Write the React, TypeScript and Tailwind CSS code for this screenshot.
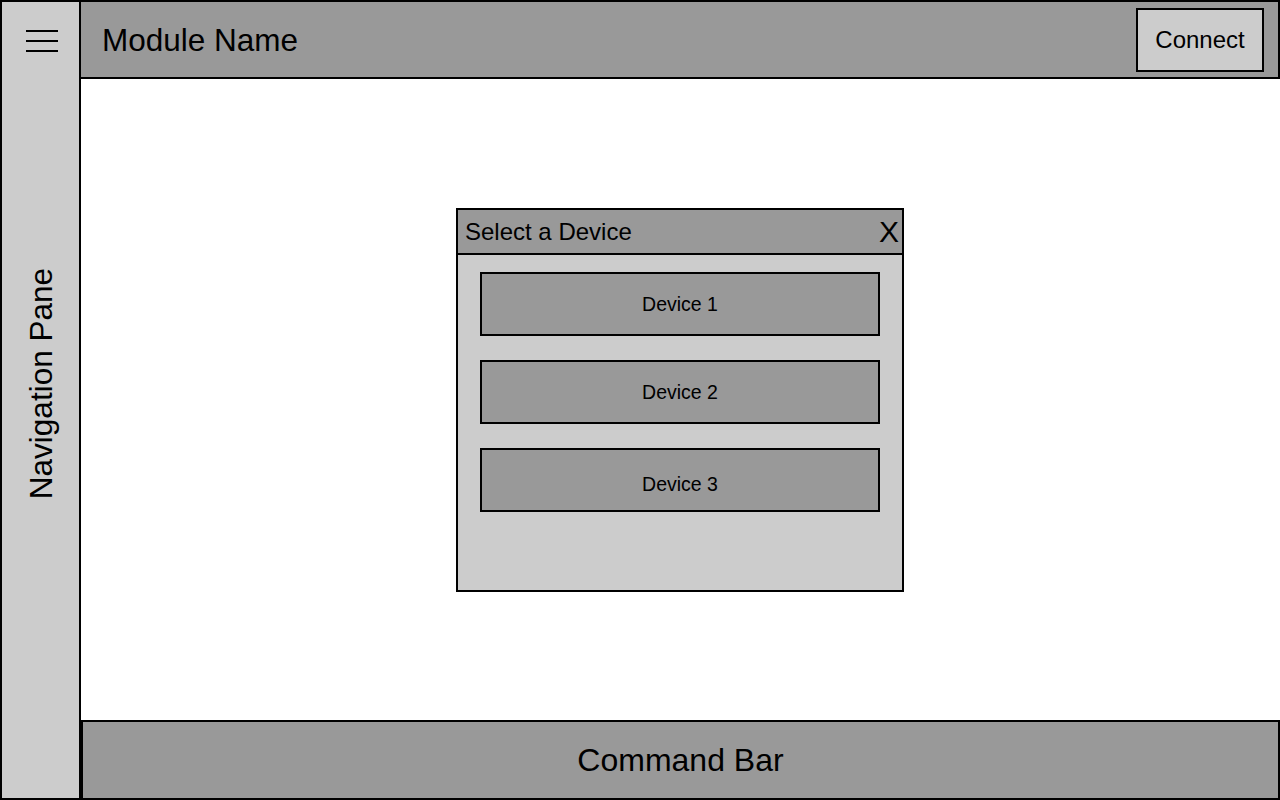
const DEVICES = [
  { id: 1, name: 'Device 1', pad: 'pt-[1px]' },
  { id: 2, name: 'Device 2', pad: 'pt-[1px]' },
  { id: 3, name: 'Device 3', pad: 'pt-[9px]' }
];

export default function App() {
  return (
    <div className="flex h-[800px] w-[1280px] overflow-hidden bg-white font-['Liberation_Sans',Arial,sans-serif] text-black">
      <aside className="flex w-[81px] shrink-0 flex-col border-2 border-black bg-[#cccccc]">
        <div className="flex h-[77px] items-center justify-center pl-[2px]">
          <div className="flex flex-col gap-[8px]">
            <span className="block h-[2px] w-[32px] bg-black" />
            <span className="block h-[2px] w-[32px] bg-black" />
            <span className="block h-[2px] w-[32px] bg-black" />
          </div>
        </div>
        <div className="flex flex-1 items-center justify-center pb-[110px] pl-[3px]">
          <span className="rotate-180 text-[31.5px] leading-none whitespace-nowrap [writing-mode:vertical-rl]">
            Navigation Pane
          </span>
        </div>
      </aside>

      <div className="flex flex-1 flex-col">
        <header className="flex h-[79px] items-center justify-between border-y-2 border-r-2 border-black bg-[#999999] pl-[21px] pr-[14px]">
          <h1 className="pt-[2px] text-[31.5px] leading-none">Module Name</h1>
          <button className="flex h-[64px] w-[128px] items-center justify-center border-2 border-black bg-[#cccccc] text-[24px]">
            Connect
          </button>
        </header>

        <main className="flex flex-1 items-center justify-center pt-[1px] pr-[1px]">
          <div className="flex h-[384px] w-[448px] flex-col border-2 border-black bg-[#cccccc]">
            <div className="flex h-[45px] items-center justify-between border-b-2 border-black bg-[#999999] pl-[7px] pr-[3px]">
              <span className="text-[24px] leading-none">Select a Device</span>
              <span className="text-[30px] leading-none">X</span>
            </div>
            <div className="flex flex-col items-center gap-[24px] pt-[17px]">
              {DEVICES.map(device => (
                <button
                  key={device.id}
                  className={`flex h-[64px] w-[400px] items-center justify-center border-2 border-black bg-[#999999] text-[19.5px] ${device.pad}`}
                >
                  {device.name}
                </button>
              ))}
            </div>
          </div>
        </main>

        <footer className="flex h-[80px] items-center justify-center border-2 border-black bg-[#999999]">
          <span className="text-[32px] leading-none">Command Bar</span>
        </footer>
      </div>
    </div>
  );
}
